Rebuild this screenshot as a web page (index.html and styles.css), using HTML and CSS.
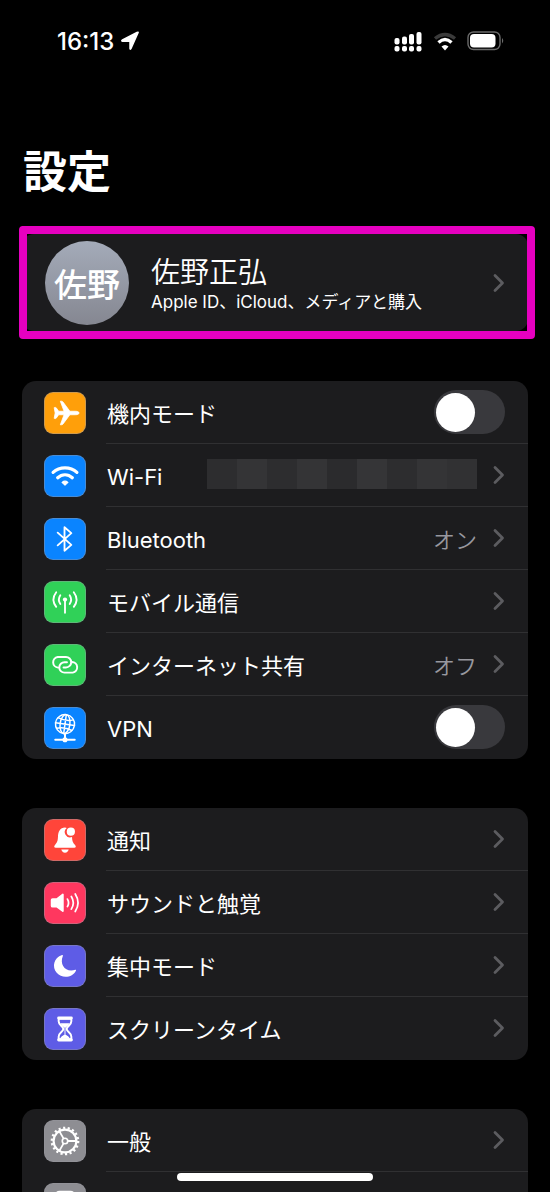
FILE: index.html
```html
<!DOCTYPE html>
<html lang="ja">
<head>
<meta charset="utf-8">
<meta name="viewport" content="width=device-width, initial-scale=1">
<title>設定</title>
<link rel="stylesheet" href="styles.css">
</head>
<body>
<svg width="0" height="0" class="defs" aria-hidden="true">
  <symbol id="chevron" viewBox="0 0 12 20"><path d="M2 2.500L9.500 10L2 17.500" fill="none" stroke="currentColor" stroke-width="2.800" stroke-linecap="round" stroke-linejoin="round"/></symbol>
</svg>
<div class="screen">
  <header class="status">
    <div class="status-left">
      <time>16:13</time>
      <svg width="20" height="20" viewBox="0 0 20 20" aria-hidden="true"><path d="M18 1.800L11 17.500Q10.400 18.800 10 17.500V10.200H2.500Q1 9.800 2.500 9L17 1.500Q18.500 .8 18 1.800Z" fill="#fff" stroke="#fff" stroke-width="1.500" stroke-linejoin="round"/></svg>
    </div>
    <div class="status-right">
      <svg width="29" height="21" viewBox="0 0 29 21" fill="#fff" aria-hidden="true">
        <rect x="0.500" y="7" width="5" height="6.500" rx="2"/><rect x="8" y="5.500" width="5" height="8" rx="2"/><rect x="15" y="3" width="5" height="10.500" rx="2"/><rect x="22.500" y="1" width="5" height="12.500" rx="2"/>
        <rect x="0.500" y="15" width="5" height="5.500" rx="2"/><rect x="8" y="15" width="5" height="5.500" rx="2"/><rect x="15" y="15" width="5" height="5.500" rx="2"/><rect x="22.500" y="15" width="5" height="5.500" rx="2"/>
      </svg>
      <svg width="24" height="19" viewBox="0 0 24 19" fill="none" stroke-width="3.400" aria-hidden="true">
        <path d="M2 6.500Q12-1.500 22 6.500" stroke="#3a3a3a"/><path d="M5.500 10.500Q12 4.500 18.500 10.500" stroke="#fff"/><path d="M8.500 14.500Q12 11.500 15.500 14.500L12 18.500Z" fill="#fff"/>
      </svg>
      <svg width="38" height="20" viewBox="0 0 38 20" aria-hidden="true">
        <rect x="1" y="1" width="32" height="17.500" rx="5.500" fill="none" stroke="#6a6a6a" stroke-width="1.400"/><rect x="3" y="3" width="25.500" height="13.500" rx="4" fill="#fff"/><path d="M35 7Q37.500 9.500 35 12.500Z" fill="#6a6a6a"/>
      </svg>
    </div>
  </header>

  <main class="content">
    <h1>設定</h1>

    <section class="profile">
      <a href="#account" class="profile-link">
        <span class="avatar">佐野</span>
        <span class="profile-text">
          <span class="profile-name">佐野正弘</span>
          <span class="profile-sub">Apple ID、iCloud、メディアと購入</span>
        </span>
        <svg class="chevron"><use href="#chevron"/></svg>
      </a>
    </section>

    <ul class="group">
      <li class="row">
        <svg class="icon orange" viewBox="0 0 41 41" aria-hidden="true"><path d="M35 20.500C35 19.300 33 18.700 31 18.700H25.500L18.500 9.300Q17.800 8.400 16.800 8.400H15.700L19.500 18.700H14L11.500 15.200Q11 14.600 10 14.800L9.400 15L10.400 20.500L9.400 26L10 26.200Q11 26.400 11.500 25.800L14 22.300H19.500L15.700 32.600H16.800Q17.800 32.600 18.500 31.700L25.500 22.300H31C33 22.300 35 21.700 35 20.500Z" fill="#fff" stroke="#fff" stroke-width="0.800"/></svg>
        <label class="body"><span class="label">機内モード</span><input class="switch" type="checkbox" role="switch"></label>
      </li>
      <li class="row">
        <svg class="icon blue" viewBox="0 0 41 41" fill="none" stroke="#fff" stroke-width="3.300" stroke-linecap="round" aria-hidden="true"><path d="M8.300 16.800C15 10.500 26 10.500 32.700 16.800M13 22.300C17.500 18.200 23.500 18.200 28 22.300"/><path d="M17.500 27Q20.500 24.700 23.500 27L20.500 29.800Z" fill="#fff" stroke-width="1.200" stroke-linejoin="round"/></svg>
        <a href="#wifi" class="body"><span class="label">Wi-Fi</span><span class="mosaic"></span><svg class="chevron"><use href="#chevron"/></svg></a>
      </li>
      <li class="row">
        <svg class="icon blue" viewBox="0 0 41 41" fill="none" stroke="#fff" stroke-width="1.900" stroke-linejoin="round" stroke-linecap="round" aria-hidden="true"><path d="M13 14L27 26.500L20 32.500V8.500L27 14.500L13 27"/></svg>
        <a href="#bluetooth" class="body"><span class="label">Bluetooth</span><span class="value">オン</span><svg class="chevron"><use href="#chevron"/></svg></a>
      </li>
      <li class="row">
        <svg class="icon green" viewBox="0 0 41 41" fill="none" stroke="#fff" stroke-width="1.900" stroke-linecap="round" aria-hidden="true"><path d="M20.500 18V31.500M15.700 13.500Q12.700 18 15.700 22.500M25.300 13.500Q28.300 18 25.300 22.500M11.500 10.500Q5.800 18 11.500 25.500M29.500 10.500Q35.200 18 29.500 25.500"/><circle cx="20.500" cy="18" r="2.200" fill="#fff" stroke="none"/></svg>
        <a href="#mobile" class="body"><span class="label">モバイル通信</span><svg class="chevron"><use href="#chevron"/></svg></a>
      </li>
      <li class="row">
        <svg class="icon green" viewBox="0 0 41 41" fill="none" stroke="#fff" stroke-width="2" stroke-linecap="round" aria-hidden="true"><path d="M13.300 23.200A5.500 5.500 0 0 1 13 12.300H21.500A5.300 5.300 0 0 1 21.500 23H19M27.700 17.400A5.500 5.500 0 0 1 28.500 28.300H20A5.300 5.300 0 0 1 20 17.600H22.500"/></svg>
        <a href="#tethering" class="body"><span class="label">インターネット共有</span><span class="value">オフ</span><svg class="chevron"><use href="#chevron"/></svg></a>
      </li>
      <li class="row">
        <svg class="icon blue" viewBox="0 0 41 41" fill="none" stroke="#fff" stroke-width="1.500" stroke-linecap="round" aria-hidden="true"><g transform="rotate(8 20.500 16.500)"><circle cx="20.500" cy="16.500" r="9.800"/><ellipse cx="20.500" cy="16.500" rx="5" ry="9.800"/><path d="M20.500 6.700V26.300M10.700 16.500H30.300M12.500 11Q20.500 14 28.500 11M12.500 22Q20.500 19 28.500 22"/></g><path d="M20.500 26.500V32M10.500 32.500H30.500" stroke-width="2"/><circle cx="20.500" cy="32.500" r="2.600" fill="#fff" stroke="none"/></svg>
        <label class="body"><span class="label">VPN</span><input class="switch" type="checkbox" role="switch"></label>
      </li>
    </ul>

    <ul class="group">
      <li class="row">
        <svg class="icon red" viewBox="0 0 41 41" aria-hidden="true"><path d="M20.500 7.800C15.500 7.800 13.500 12 13.300 17C13.100 22 12.500 23 10 26Q8.500 28.300 11 28.500H30Q32.500 28.300 31 26C28.500 23 27.900 22 27.700 17.500A5.500 5.500 0 0 1 22.300 8.100Q21.500 7.800 20.500 7.800ZM16.700 30.300H24.300Q23.500 33.500 20.500 33.500Q17.500 33.500 16.700 30.300Z" fill="#fff"/><circle cx="26.500" cy="12" r="4.200" fill="#fff"/></svg>
        <a href="#notifications" class="body"><span class="label">通知</span><svg class="chevron"><use href="#chevron"/></svg></a>
      </li>
      <li class="row">
        <svg class="icon pink" viewBox="0 0 41 41" fill="none" stroke="#fff" stroke-width="1.800" stroke-linecap="round" aria-hidden="true"><path d="M7.800 16.500H12L18.300 11.800V28.800L12 24.200H7.800Q6.800 24.200 6.800 23.200V17.500Q6.800 16.500 7.800 16.500Z" fill="#fff" stroke-linejoin="round"/><path d="M23 16.500Q25.300 20.300 23 24.200M27 13.800Q31 20.300 27 26.800M31 11.300Q36.700 20.300 31 29.300"/></svg>
        <a href="#sound" class="body"><span class="label">サウンドと触覚</span><svg class="chevron"><use href="#chevron"/></svg></a>
      </li>
      <li class="row">
        <svg class="icon indigo" viewBox="0 0 41 41" aria-hidden="true"><path d="M17.500 9.300C9 12 6.800 21.500 12 27.500C17.500 33.800 28.500 32.500 31.800 25Q32.100 24 31 24.300C21.500 27.500 14.500 19.500 18.300 10.200Q18.600 9 17.500 9.300Z" fill="#fff"/></svg>
        <a href="#focus" class="body"><span class="label">集中モード</span><svg class="chevron"><use href="#chevron"/></svg></a>
      </li>
      <li class="row">
        <svg class="icon indigo" viewBox="0 0 41 41" aria-hidden="true"><path d="M14 9.200H27M14 31.800H27" stroke="#fff" stroke-width="3" stroke-linecap="round"/><path d="M14 10V12.500C14 17 18.800 17.500 18.800 20.500S14 24 14 28.500V31H27V28.500C27 24 22.200 23.500 22.200 20.500S27 17 27 12.500V10Z" fill="none" stroke="#fff" stroke-width="2"/><path d="M15.500 14.500H25.500Q24 17 20.500 19.500Q17 17 15.500 14.500ZM15.500 30.500Q16 28.500 20.500 26Q25 28.500 25.500 30.500ZM20 19H21V26H20Z" fill="#fff"/></svg>
        <a href="#screentime" class="body"><span class="label">スクリーンタイム</span><svg class="chevron"><use href="#chevron"/></svg></a>
      </li>
    </ul>

    <ul class="group">
      <li class="row">
        <svg class="icon gray" viewBox="0 0 41 41" fill="none" stroke="#fff" aria-hidden="true"><circle cx="20.500" cy="20.500" r="13.500" stroke-width="2.400" stroke-dasharray="2.200 2.512"/><circle cx="20.500" cy="20.500" r="11.700" stroke-width="2.200"/><circle cx="20.500" cy="20.500" r="2.800" stroke-width="1.700"/><path d="M23.300 20.500H32M19.100 18.100L14.700 10.500M19.100 22.900L14.700 30.500" stroke-width="1.800"/></svg>
        <a href="#general" class="body"><span class="label">一般</span><svg class="chevron"><use href="#chevron"/></svg></a>
      </li>
      <li class="row">
        <svg class="icon gray" viewBox="0 0 41 41" fill="none" stroke="#fff" stroke-width="2" aria-hidden="true"><rect x="10" y="8" width="21" height="10" rx="5"/><rect x="10" y="22" width="21" height="10" rx="5"/></svg>
        <span class="body"></span>
      </li>
    </ul>
  </main>
  <div class="home-bar"></div>
</div>
</body>
</html>
```

FILE: styles.css
```css
* { box-sizing: border-box; }

body {
  margin: 0;
  background: #000;
  color: #fff;
  font-family: Inter, "Noto Sans CJK JP", sans-serif;
}

a { color: inherit; text-decoration: none; }

.defs { position: absolute; }

.screen {
  position: relative;
  height: 100vh;
  overflow: hidden;
}

.status {
  display: flex;
  justify-content: space-between;
  align-items: center;
  height: 82px;
  padding: 0 45px 0 57px;
}

.status-left { display: flex; align-items: center; gap: 6px; }
.status-left time { font-size: 24px; font-weight: 500; }
.status-right { display: flex; align-items: center; gap: 10px; }

.content { padding: 0 22px; }

h1 {
  margin: 0;
  padding: 58px 0 30px 1px;
  font-size: 44px;
  line-height: 64px;
  font-weight: 700;
}

.profile {
  position: relative;
  margin-bottom: 50px;
  border-radius: 12px;
  background: #1c1c1e;
}

/* Callout frame drawn over the account card */
.profile::after {
  content: "";
  position: absolute;
  inset: -8px -7px -8px -3px;
  border: 8px solid #e600c0;
  border-radius: 4px;
  pointer-events: none;
}

.profile-link {
  display: flex;
  align-items: center;
  padding: 7px 23px 6px;
}

.avatar {
  flex: none;
  display: flex;
  align-items: center;
  justify-content: center;
  width: 84px;
  height: 84px;
  border-radius: 50%;
  background: linear-gradient(#a4abb9, #858791);
  font-size: 33px;
  font-weight: 500;
}

.profile-text {
  flex: 1;
  display: flex;
  flex-direction: column;
  padding: 4px 0 0 22px;
}

.profile-name { font-size: 29px; line-height: 34px; font-weight: 350; }
.profile-sub { font-size: 17px; line-height: 24px; }

.chevron {
  flex: none;
  width: 12px;
  height: 20px;
  color: #5c5c60;
}

.group {
  margin: 0 0 49px;
  padding: 0;
  list-style: none;
  border-radius: 14px;
  background: #1c1c1e;
  overflow: hidden;
}

.row {
  display: flex;
  align-items: center;
  height: 63px;
  padding-left: 22px;
}

.icon {
  flex: none;
  width: 42px;
  height: 42px;
  border-radius: 9px;
  border: 1px solid rgb(150 150 160 / 45%);
}

.orange { background: #ff9f0a; }
.blue { background: #0a84ff; }
.green { background: #30d158; }
.red { background: #ff453a; }
.pink { background: #ff375f; }
.indigo { background: #5e5ce6; }
.gray { background: #8e8e93; }

.body {
  flex: 1;
  display: flex;
  align-items: center;
  gap: 16px;
  height: 63px;
  margin-left: 20px;
  padding: 0 23px 0 1px;
  border-bottom: 1px solid #303032;
}

.row:last-child .body { border-bottom-color: transparent; }

.label,
.value {
  padding-top: 4px;
  font-size: 22px;
  line-height: 32px;
}

.label { flex: 1; }
.value { font-weight: 350; color: #98989f; }

.mosaic {
  width: 270px;
  height: 30px;
  margin-bottom: 2px;
  background: linear-gradient(90deg,
    #2d2d2f 0 30px, #343436 30px 60px, #2d2d2f 60px 90px,
    #343436 90px 120px, #2b2b2d 120px 150px, #353537 150px 180px,
    #2d2d2f 180px 210px, #343436 210px 240px, #313133 240px);
}

.switch {
  appearance: none;
  display: flex;
  align-items: center;
  width: 71px;
  height: 44px;
  margin: 0;
  padding: 0 2px;
  border-radius: 22px;
  background: #39393d;
}

.switch::before {
  content: "";
  width: 39px;
  height: 39px;
  border-radius: 50%;
  background: #fff;
}

.switch:checked { justify-content: flex-end; background: #30d158; }

.home-bar {
  position: absolute;
  bottom: 11px;
  left: 50%;
  width: 196px;
  height: 8px;
  margin-left: -98px;
  border-radius: 4px;
  background: #fff;
}
```
